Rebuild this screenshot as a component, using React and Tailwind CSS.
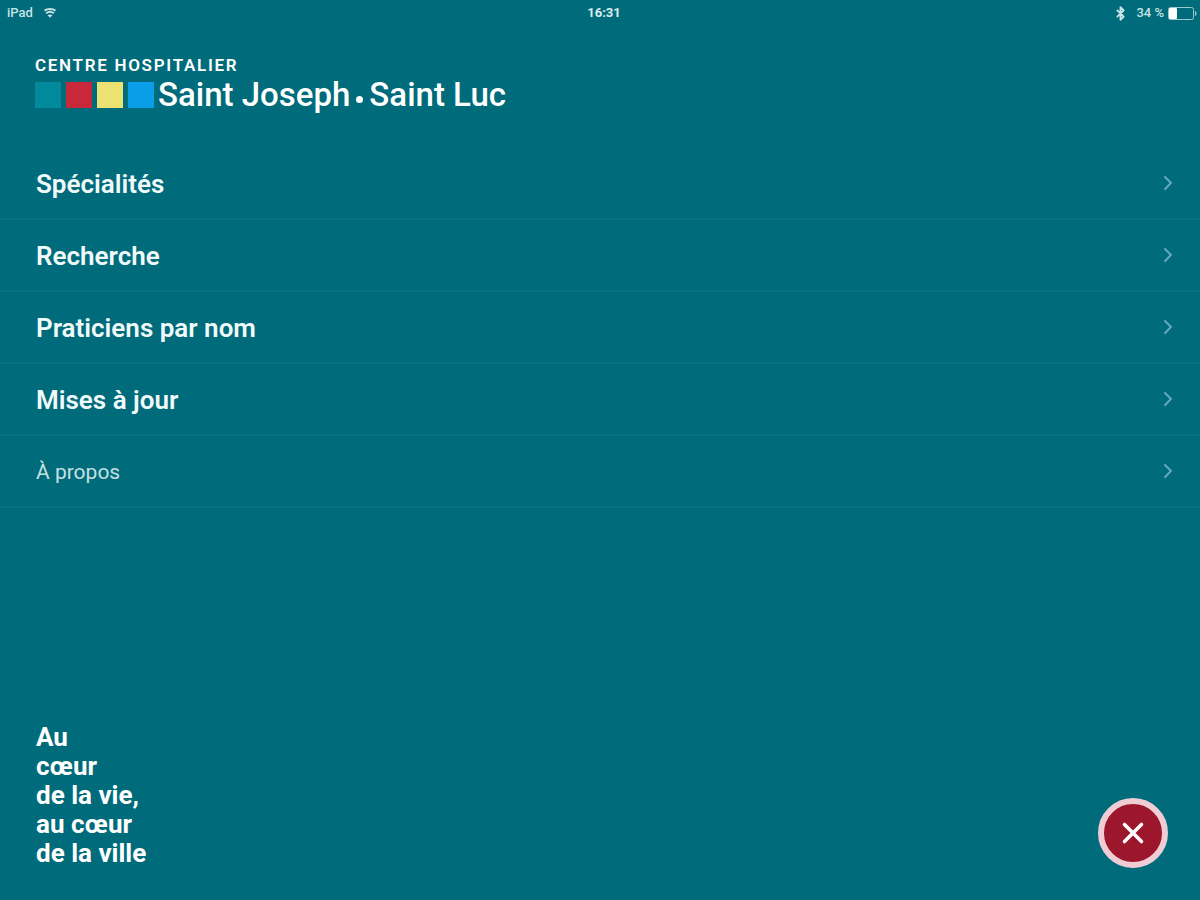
import { Bluetooth, ChevronRight, X } from "lucide-react";

const MENU = [
    { label: "Spécialités", href: "#specialites" },
    { label: "Recherche", href: "#recherche" },
    { label: "Praticiens par nom", href: "#praticiens" },
    { label: "Mises à jour", href: "#mises-a-jour" },
    { label: "À propos", href: "#a-propos", light: true },
];

const SLOGAN = ["Au", "cœur", "de la vie,", "au cœur", "de la ville"];

function WifiIcon() {
    return (
        <svg viewBox="0 0 14 10" className="w-3.5 h-2.5" fill="none" stroke="currentColor" strokeWidth="2">
            <path d="M1.5 2.6C4.6.6 9.4.6 12.5 2.6" />
            <path d="M3.2 5.2c2.2-1.6 5.4-1.6 7.6 0" />
            <path d="M4.6 7.2 7 9.8l2.4-2.6c-1.3-1.1-3.5-1.1-4.8 0z" fill="currentColor" stroke="none" />
        </svg>
    );
}

function BatteryIcon() {
    return (
        <svg viewBox="0 0 29 13" className="w-[29px] h-[13px]">
            <rect x="0.5" y="0.5" width="25" height="12" rx="2" fill="none" stroke="#9cc8ce" />
            <rect x="1" y="1" width="8" height="11" rx="1" fill="#fff" />
            <path d="M27 4c2 .6 2 4.4 0 5z" fill="#9cc8ce" />
        </svg>
    );
}

function StatusBar() {
    return (
        <div className="grid grid-cols-3 items-center h-[26px] pl-[7px] pr-[3px] text-[13px] font-medium text-[#c9e3e6]">
            <div className="flex items-center gap-2.5">
                <span>iPad</span>
                <WifiIcon />
            </div>
            <div className="pl-1 text-center font-bold text-[#d9edef]">16:31</div>
            <div className="flex items-center justify-end gap-1">
                <Bluetooth size={15} strokeWidth={3} />
                <span className="pl-1">34 %</span>
                <BatteryIcon />
            </div>
        </div>
    );
}

function Logo() {
    return (
        <header className="px-[35px] pt-[30px] pb-[34px] text-white">
            <p className="text-[17px] leading-[18px] font-semibold tracking-widest">CENTRE HOSPITALIER</p>
            <div className="flex items-center gap-1 h-[42px]">
                <div className="flex gap-[5px]">
                    <span className="size-[26px] bg-[#008a9b]" />
                    <span className="size-[26px] bg-[#c8283a]" />
                    <span className="size-[26px] bg-[#ebe271]" />
                    <span className="size-[26px] bg-[#0a9ee8]" />
                </div>
                <h1 className="flex items-center gap-1.5 text-[33px] leading-10 font-medium whitespace-nowrap">
                    <span>Saint Joseph</span>
                    <span className="size-[7px] mt-2 rounded-full bg-white" />
                    <span>Saint Luc</span>
                </h1>
            </div>
        </header>
    );
}

export default function App() {
    return (
        <div className="flex flex-col min-h-screen bg-[#006b7a] font-['Roboto','Liberation_Sans',sans-serif]">
            <StatusBar />
            <Logo />

            <nav className="-mt-0.5">
                <ul>
                    {MENU.map((item) => (
                        <li key={item.label}>
                            <a
                                href={item.href}
                                className="flex items-center justify-between h-[72px] pl-9 pr-5 border-b-2 border-[#09717f]"
                            >
                                <span
                                    className={
                                        item.light
                                            ? "pt-0.5 text-[21px] leading-8 text-[#c5e0e3]"
                                            : "pt-0.5 text-[26px] leading-8 font-semibold text-[#f1fafb]"
                                    }
                                >
                                    {item.label}
                                </span>
                                <ChevronRight size={24} strokeWidth={2} className="text-[#64a9bb]" />
                            </a>
                        </li>
                    ))}
                </ul>
            </nav>

            <footer className="flex items-end justify-between mt-auto pl-9 pr-8 pb-8">
                <p className="text-[26px] leading-[29px] font-bold text-white">
                    {SLOGAN.map((line) => (
                        <span key={line} className="block">
                            {line}
                        </span>
                    ))}
                </p>
                <button
                    type="button"
                    aria-label="Fermer"
                    className="flex items-center justify-center size-[70px] rounded-full border-[6px] border-[#f0cdd5] bg-[#9c162c] text-white"
                >
                    <X size={34} strokeWidth={2.5} />
                </button>
            </footer>
        </div>
    );
}
